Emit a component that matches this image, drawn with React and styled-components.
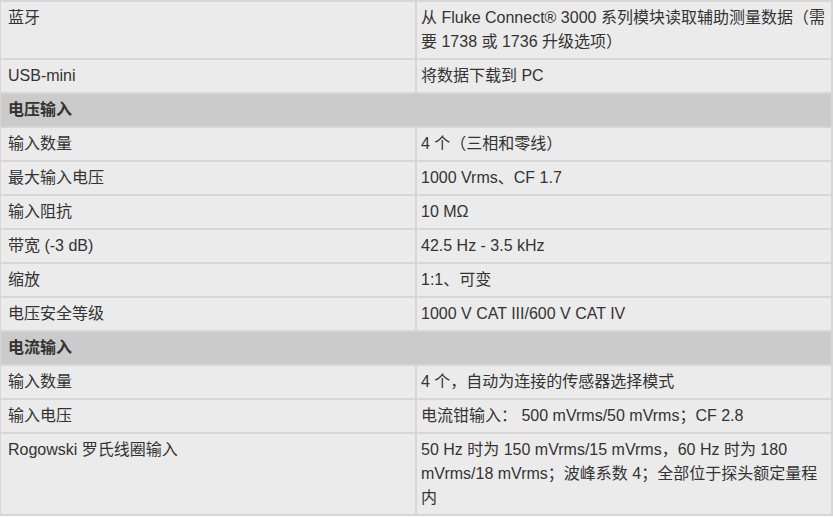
import React from "react";
import styled, { createGlobalStyle } from "styled-components";

const GlobalStyle = createGlobalStyle`
  html, body {
    margin: 0;
    padding: 0;
    background: #ffffff;
  }
  body {
    font-family: "Liberation Sans", Arial, "Noto Sans CJK SC", sans-serif;
    color: #333333;
  }
`;

const Table = styled.table`
  width: 834px;
  margin-left: -1px;
  border-collapse: collapse;
  font-size: 16px;
  line-height: 24px;
`;

const Row = styled.tr`
  background-color: ${(p) => (p.$section ? "#cbcbcb" : "#ebebeb")};
`;

const Cell = styled.td`
  width: ${(p) => (p.$label ? "50%" : "auto")};
  vertical-align: top;
  border: 2px solid #d6d6d6;
  padding: 4px ${(p) => (p.$label ? "6px" : "3px")} 4px
    ${(p) => (p.$label ? "7px" : "4px")};
  font-weight: ${(p) => (p.$section ? "bold" : "normal")};
`;

const rows = [
  ["蓝牙", "从 Fluke Connect® 3000 系列模块读取辅助测量数据（需要 1738 或 1736 升级选项）"],
  ["USB-mini", "将数据下载到 PC"],
  ["电压输入"],
  ["输入数量", "4 个（三相和零线）"],
  ["最大输入电压", "1000 Vrms、CF 1.7"],
  ["输入阻抗", "10 MΩ"],
  ["带宽 (-3 dB)", "42.5 Hz - 3.5 kHz"],
  ["缩放", "1:1、可变"],
  ["电压安全等级", "1000 V CAT III/600 V CAT IV"],
  ["电流输入"],
  ["输入数量", "4 个，自动为连接的传感器选择模式"],
  ["输入电压", "电流钳输入： 500 mVrms/50 mVrms；CF 2.8"],
  ["Rogowski 罗氏线圈输入", "50 Hz 时为 150 mVrms/15 mVrms，60 Hz 时为 180 mVrms/18 mVrms；波峰系数 4；全部位于探头额定量程内"],
];

function App() {
  return (
    <>
      <GlobalStyle />
      <Table>
        <tbody>
          {rows.map((r, i) =>
            r.length === 1 ? (
              <Row key={i} $section>
                <Cell $label $section colSpan={2}>
                  {r[0]}
                </Cell>
              </Row>
            ) : (
              <Row key={i}>
                <Cell $label>{r[0]}</Cell>
                <Cell>{r[1]}</Cell>
              </Row>
            )
          )}
        </tbody>
      </Table>
    </>
  );
}

export default App;
